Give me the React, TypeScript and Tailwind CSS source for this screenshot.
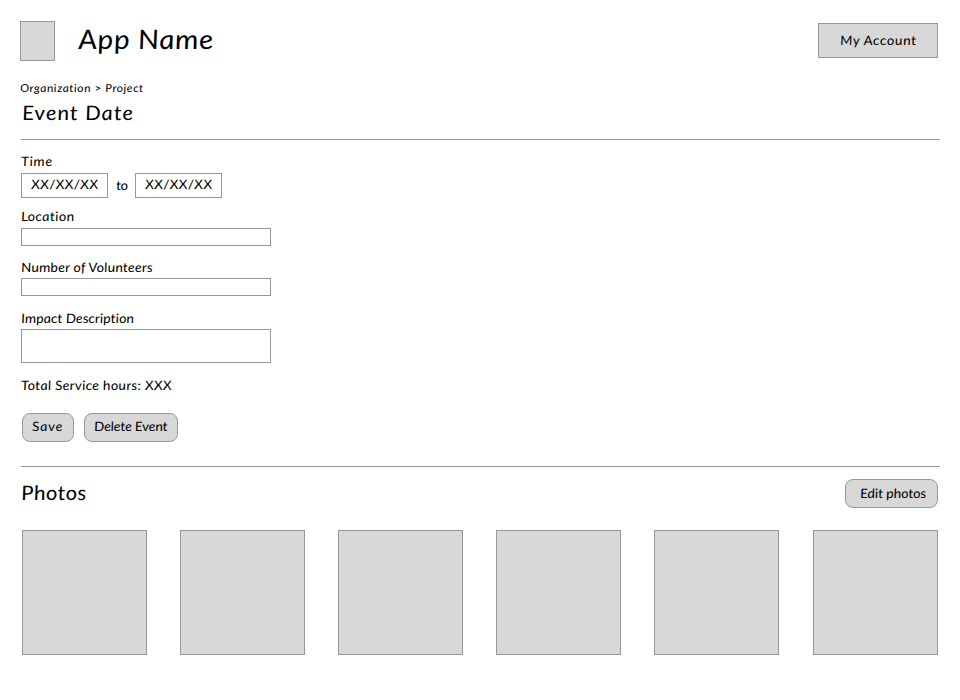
import type { ReactNode } from "react";

const box = "border border-[#979797]";
const grayBox = box + " bg-[#d8d8d8]";

/* Wide, nearly upright cursive lettering used for every text on the page. */
function Ink({ children, className = "" }: { children: ReactNode; className?: string }) {
  return (
    <span className={"block w-max origin-left [transform:scaleX(1.1)_skewX(5deg)] " + className}>{children}</span>
  );
}

function Label({ text, className, ink }: { text: string; className: string; ink?: string }) {
  return (
    <label className={"block h-4 " + className}>
      <Ink className={ink}>{text}</Ink>
    </label>
  );
}

function DateInput() {
  return (
    <div className={box + " h-[25px] w-[87px] pl-[9px] pt-[2px]"}>
      <Ink className="tracking-[0.35px]">XX/XX/XX</Ink>
    </div>
  );
}

export default function App() {
  return (
    <main className="h-[700px] w-[960px] overflow-hidden whitespace-nowrap bg-white pl-5 pt-[21px] font-['Bradley_Hand','Lato',sans-serif] text-[13px] italic leading-4 text-black [font-variant-ligatures:none]">
      <header className="flex h-10 w-[918px] items-start">
        <div className={grayBox + " h-10 w-[35px]"} />
        <h1 className="ml-[23px] mt-[2px] text-[27px] leading-8">
          <Ink className="tracking-[0.6px]">App Name</Ink>
        </h1>
        <button className={grayBox + " ml-auto mt-[2px] h-[35px] w-[120px] pb-px pl-[21px] italic"}>
          <Ink className="tracking-[0.55px]">My Account</Ink>
        </button>
      </header>
      <nav className="mt-[19px] text-[11px]">
        <Ink className="tracking-[0.45px]">Organization &gt; Project</Ink>
      </nav>
      <h2 className="mt-1 pl-[2px] text-[20px] leading-6">
        <Ink className="tracking-[0.95px]">Event Date</Ink>
      </h2>
      <hr className="ml-px mt-[15px] w-[919px] border-[#979797]" />

      <form className="ml-px w-[250px]">
        <Label text="Time" className="mt-[13px]" ink="tracking-[0.55px]" />
        <div className="mt-1 flex">
          <DateInput />
          <div className="ml-2 mr-auto mt-1">
            <Ink className="tracking-[-0.3px]">to</Ink>
          </div>
          <div className="mr-[49px]">
            <DateInput />
          </div>
        </div>
        <Label text="Location" className="mt-[10px]" ink="tracking-[0.3px]" />
        <div className={box + " mt-1 h-[18px]"} />
        <Label text="Number of Volunteers" className="mt-[13px]" ink="tracking-[0.14px]" />
        <div className={box + " mt-[3px] h-[18px]"} />
        <Label text="Impact Description" className="mt-[14px]" />
        <div className={box + " mt-[3px] h-[34px]"} />
        <p className="mt-[14px]">
          <Ink className="tracking-[0.25px]">Total Service hours: XXX</Ink>
        </p>
        <div className="ml-px mt-5 flex gap-[10px]">
          <button type="button" className={grayBox + " h-[29px] w-[52px] rounded-lg pb-[3px] pl-[9px] italic"}>
            <Ink className="tracking-[0.7px]">Save</Ink>
          </button>
          <button type="button" className={grayBox + " h-[29px] w-[94px] rounded-lg pb-[3px] pl-[9px] italic"}>
            <Ink className="tracking-[-0.15px]">Delete Event</Ink>
          </button>
        </div>
      </form>

      <hr className="ml-px mt-6 w-[919px] border-[#979797]" />
      <section className="w-[918px]">
        <div className="mt-3 flex h-[29px] items-start justify-between">
          <h2 className="mt-px pl-px text-[20px] leading-6">
            <Ink className="tracking-[0.4px]">Photos</Ink>
          </h2>
          <button className={grayBox + " h-[29px] w-[93px] rounded-lg pb-px pl-[14px] italic"}>
            <Ink className="tracking-[-0.1px]">Edit photos</Ink>
          </button>
        </div>
        <div className="ml-[2px] mt-[22px] flex gap-[33px]">
          {[0, 1, 2, 3, 4, 5].map((i) => (
            <div key={i} className={grayBox + " size-[125px] last:ml-px"} />
          ))}
        </div>
      </section>
    </main>
  );
}
